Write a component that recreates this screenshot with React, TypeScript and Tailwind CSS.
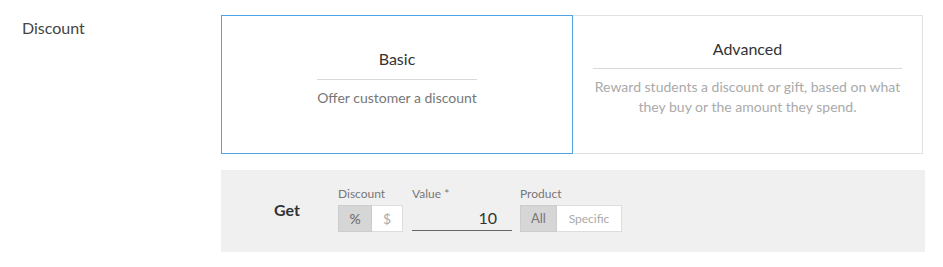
import React from "react";

export default function App() {
  return (
    <div
      className="flex w-[943px] h-[267px] bg-white"
      style={{ fontFamily: "Lato, 'Open Sans', sans-serif" }}
    >
      <div className="w-[221px] shrink-0 pl-[22px] pt-[18px]">
        <div className="text-[16px] leading-[20px] text-[#444]">Discount</div>
      </div>
      <div className="flex flex-col pt-[15px]">
        <div className="flex h-[139px]">
          <div className="w-[352px] border border-[#4fa3e6] flex items-center justify-center px-5 pb-[13px]">
            <div className="w-fit flex flex-col items-center">
              <div className="text-[16px] leading-[20px] text-[#333] pb-[10px] w-full text-center border-b border-[#d9d9d9]">
                Basic
              </div>
              <div className="text-[14px] leading-[20px] text-[#777] mt-[8px] text-center">
                Offer customer a discount
              </div>
            </div>
          </div>
          <div className="w-[350px] border border-l-0 border-[#e2e2e2] flex items-center justify-center px-5 pb-[13px]">
            <div className="w-full flex flex-col items-center">
              <div className="text-[16px] leading-[20px] text-[#333] pb-[9px] w-full text-center border-b border-[#d9d9d9]">
                Advanced
              </div>
              <div className="text-[14px] leading-[20px] text-[#aaa] mt-[8px] text-center">
                Reward students a discount or gift, based on what they buy or the amount they spend.
              </div>
            </div>
          </div>
        </div>
        <div className="mt-[16px] w-[704px] h-[82px] bg-[#f0f0f0] flex items-start pl-[53px] pt-[16px]">
          <div className="mt-[14px] w-[64px] text-[16px] leading-[20px] font-bold text-[#333]">Get</div>
          <div className="flex flex-col">
            <div className="text-[12px] leading-[16px] text-[#777] mb-[3px]">Discount</div>
            <div className="flex h-[27px] w-[65px]">
              <div className="w-[34px] border border-[#cccccc] bg-[#d6d6d6] flex items-center justify-center text-[14px] text-[#666]">
                %
              </div>
              <div className="flex-1 border border-l-0 border-[#dddddd] bg-white flex items-center justify-center text-[14px] text-[#aaa]">
                $
              </div>
            </div>
          </div>
          <div className="flex flex-col ml-[9px] w-[100px]">
            <div className="text-[12px] leading-[16px] text-[#777] mb-[3px]">Value *</div>
            <div className="h-[26px] border-b border-[#666] flex items-center justify-end pr-[15px] text-[16px] text-[#333]">
              10
            </div>
          </div>
          <div className="flex flex-col ml-[8px]">
            <div className="text-[12px] leading-[16px] text-[#777] mb-[3px]">Product</div>
            <div className="flex h-[27px] w-[102px]">
              <div className="w-[37px] border border-[#cccccc] bg-[#d6d6d6] flex items-center justify-center text-[13px] text-[#777]">
                All
              </div>
              <div className="flex-1 border border-l-0 border-[#dddddd] bg-white flex items-center justify-center text-[12px] text-[#aaa]">
                Specific
              </div>
            </div>
          </div>
        </div>
      </div>
    </div>
  );
}
